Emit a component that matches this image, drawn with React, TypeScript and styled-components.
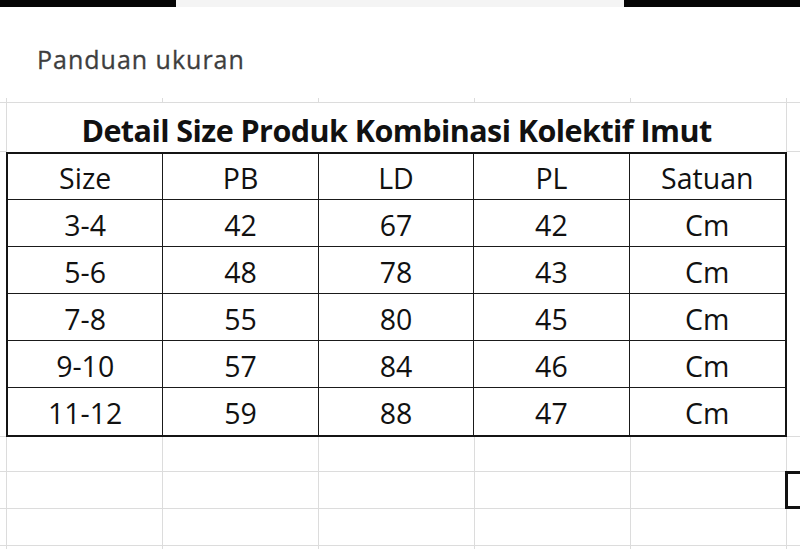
import React from 'react';
import styled, { createGlobalStyle } from 'styled-components';

const GlobalStyle = createGlobalStyle`
	html, body {
		margin: 0;
		padding: 0;
		background: #ffffff;
	}
	* {
		box-sizing: border-box;
	}
`;

const headers = ['Size', 'PB', 'LD', 'PL', 'Satuan'];
const rows = [
	['3-4', '42', '67', '42', 'Cm'],
	['5-6', '48', '78', '43', 'Cm'],
	['7-8', '55', '80', '45', 'Cm'],
	['9-10', '57', '84', '46', 'Cm'],
	['11-12', '59', '88', '47', 'Cm'],
];

// heights of the plain spreadsheet rows under the size table
const blankRows = [35, 37, 37, 10];

const App = () => {
	return (
		<Page>
			<GlobalStyle />
			<TopBar>
				<BarSegment $dark />
				<BarSegment $width={448} />
				<BarSegment $dark $grow />
			</TopBar>
			<Heading>Panduan ukuran</Heading>
			<Sheet>
				{/* thin first row */}
				<GridCell $height={5} />
				{[0, 1, 2, 3, 4].map((i) => (
					<GridCell key={'a' + i} $height={5} />
				))}
				<GridCell $height={5} $last />

				{/* merged title row */}
				<GridCell $height={49} />
				<TitleCell>Detail Size Produk Kombinasi Kolektif Imut</TitleCell>
				<GridCell $height={49} $last />

				{/* size table */}
				<StubCell />
				<SizeTable>
					{headers.map((h, c) => (
						<TableCell key={h} $lastCol={c === 4}>
							{h}
						</TableCell>
					))}
					{rows.map((r, ri) =>
						r.map((v, c) => (
							<TableCell key={ri + '-' + c} $lastCol={c === 4} $lastRow={ri === rows.length - 1}>
								{v}
							</TableCell>
						)),
					)}
				</SizeTable>
				<StubCell $last />

				{blankRows.map((h, ri) => (
					<React.Fragment key={'b' + ri}>
						<GridCell $height={h} />
						{[0, 1, 2, 3, 4].map((i) => (
							<GridCell key={i} $height={h} />
						))}
						<GridCell $height={h} $last $selected={ri === 1} />
					</React.Fragment>
				))}
			</Sheet>
		</Page>
	);
};

const Page = styled.div`
	width: 800px;
	height: 549px;
	overflow: hidden;
	background: #ffffff;
	font-family: 'Open Sans', 'Noto Sans', sans-serif;
`;

const TopBar = styled.div`
	display: flex;
	height: 7px;
`;

const BarSegment = styled.div<{ $dark?: boolean; $width?: number; $grow?: boolean }>`
	width: ${(p) => (p.$width ? p.$width + 'px' : '176px')};
	flex: ${(p) => (p.$grow ? '1' : 'none')};
	background: ${(p) => (p.$dark ? '#050505' : '#f4f4f4')};
`;

const Heading = styled.h1`
	margin: 37px 0 0 37px;
	height: 54px;
	font-family: 'Open Sans', sans-serif;
	font-weight: 400;
	font-size: 25px;
	line-height: 30px;
	letter-spacing: 1px;
	color: #3e3e3e;
	-webkit-text-stroke: 0.3px #3e3e3e;
`;

const Sheet = styled.div`
	display: grid;
	grid-template-columns: 7px repeat(5, 156px) 1fr;
	background: #ffffff;
`;

const GridCell = styled.div<{ $height: number; $last?: boolean; $selected?: boolean }>`
	position: relative;
	height: ${(p) => p.$height}px;
	border-right: ${(p) => (p.$last ? 'none' : '1px solid #dcdcdc')};
	border-bottom: 1px solid #dcdcdc;

	&::after {
		content: '';
		display: ${(p) => (p.$selected ? 'block' : 'none')};
		position: absolute;
		left: -2px;
		top: -1px;
		right: -4px;
		bottom: -1px;
		border: 3px solid #111111;
	}
`;

const StubCell = styled.div<{ $last?: boolean }>`
	border-right: ${(p) => (p.$last ? 'none' : '1px solid #dcdcdc')};
	border-bottom: 1px solid #dcdcdc;
`;

const TitleCell = styled.div`
	grid-column: span 5;
	height: 49px;
	display: flex;
	align-items: flex-end;
	justify-content: center;
	padding-bottom: 3px;
	border-right: 1px solid #dcdcdc;
	font-family: 'Open Sans', sans-serif;
	font-weight: 700;
	font-size: 30.5px;
	line-height: 38px;
	letter-spacing: -0.55px;
	color: #111111;
`;

const SizeTable = styled.div`
	grid-column: span 5;
	display: grid;
	grid-template-columns: repeat(5, 1fr);
	grid-template-rows: 46px repeat(4, 47px) 46.5px;
	margin-left: -1px;
	border: 2.5px solid #141414;
	background: #ffffff;
`;

const TableCell = styled.div<{ $lastCol?: boolean; $lastRow?: boolean }>`
	display: flex;
	align-items: center;
	justify-content: center;
	padding-top: 3px;
	border-right: ${(p) => (p.$lastCol ? 'none' : '1.5px solid #1a1a1a')};
	border-bottom: ${(p) => (p.$lastRow ? 'none' : '1.5px solid #1a1a1a')};
	font-family: 'Open Sans', sans-serif;
	font-size: 28.5px;
	line-height: 38px;
	color: #111111;
`;

export default App;
